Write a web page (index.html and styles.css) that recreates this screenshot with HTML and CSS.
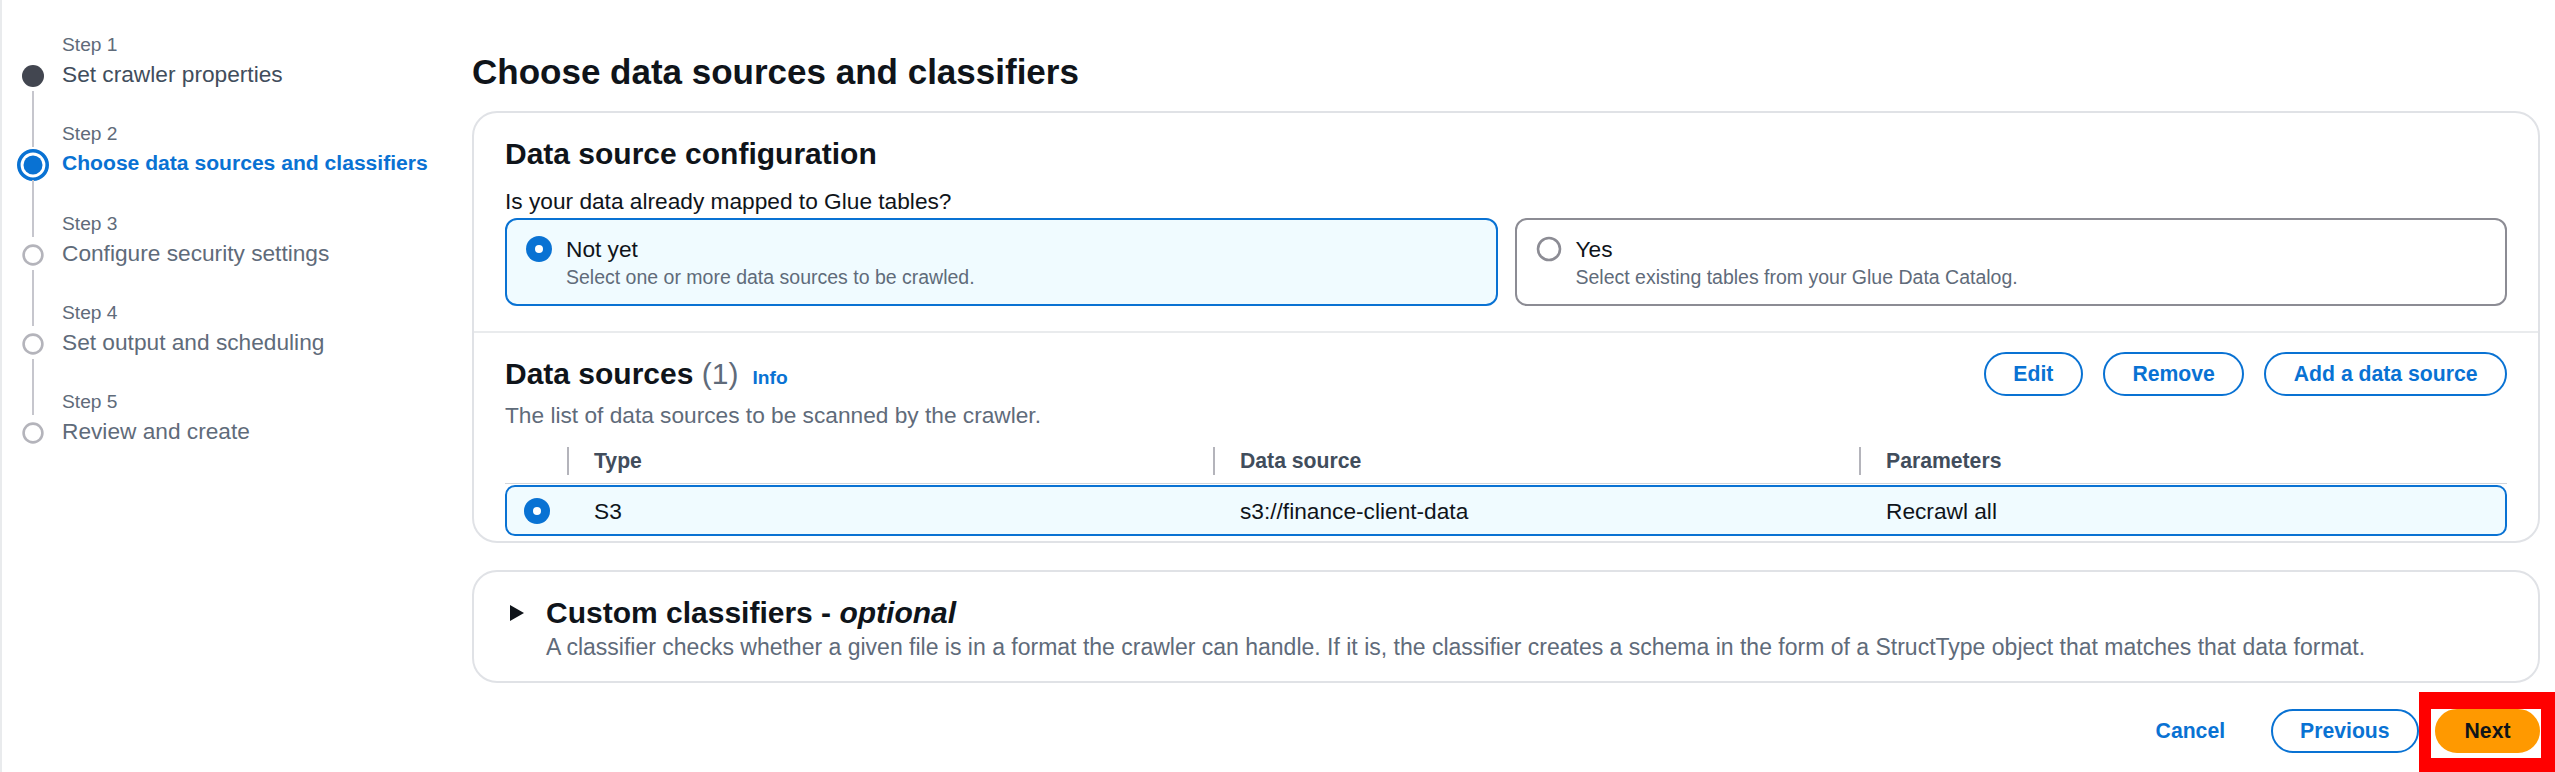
FILE: index.html
```html
<!DOCTYPE html>
<html lang="en">
<head>
<meta charset="utf-8">
<title>Choose data sources and classifiers</title>
<link rel="stylesheet" href="styles.css">
</head>
<body>
<div class="page">
  <nav class="steps">
    <span class="rail"></span><span class="step-label">Step 1</span>
    <span class="icon"><svg class="dot" width="22" height="22" viewBox="0 0 22 22"><circle cx="11" cy="11" r="11" fill="#424650"/></svg></span><span class="step-title visited">Set crawler properties</span>

    <span class="rail line"></span><span class="step-label later">Step 2</span>
    <span class="icon"><svg class="ring" width="32" height="32" viewBox="0 0 32 32"><circle cx="16" cy="16" r="14.2" fill="none" stroke="#0972d3" stroke-width="3.6"/><circle cx="16" cy="16" r="9.5" fill="#0972d3"/></svg></span><span class="step-title current">Choose data sources and classifiers</span>

    <span class="rail line"></span><span class="step-label later">Step 3</span>
    <span class="icon"><svg class="empty" width="22" height="22" viewBox="0 0 22 22"><circle cx="11" cy="11" r="9.4" fill="#fff" stroke="#b4b4bb" stroke-width="2.6"/></svg></span><span class="step-title">Configure security settings</span>

    <span class="rail line"></span><span class="step-label later">Step 4</span>
    <span class="icon"><svg class="empty" width="22" height="22" viewBox="0 0 22 22"><circle cx="11" cy="11" r="9.4" fill="#fff" stroke="#b4b4bb" stroke-width="2.6"/></svg></span><span class="step-title">Set output and scheduling</span>

    <span class="rail line"></span><span class="step-label later">Step 5</span>
    <span class="icon"><svg class="empty" width="22" height="22" viewBox="0 0 22 22"><circle cx="11" cy="11" r="9.4" fill="#fff" stroke="#b4b4bb" stroke-width="2.6"/></svg></span><span class="step-title">Review and create</span>
  </nav>

  <main class="main">
    <h1 class="page-title">Choose data sources and classifiers</h1>

    <section class="card">
      <div class="config">
        <h2 class="h2">Data source configuration</h2>
        <div class="question">Is your data already mapped to Glue tables?</div>
        <div class="tiles">
          <div class="tile selected">
            <svg class="radio" width="26" height="26" viewBox="0 0 26 26"><circle cx="13" cy="13" r="13" fill="#0972d3"/><circle cx="13" cy="13" r="4" fill="#fff"/></svg>
            <div class="tile-title">Not yet</div>
            <div class="tile-desc">Select one or more data sources to be crawled.</div>
          </div>
          <div class="tile">
            <svg class="radio" width="26" height="26" viewBox="0 0 26 26"><circle cx="13" cy="13" r="11" fill="#fff" stroke="#8c8c94" stroke-width="2.6"/></svg>
            <div class="tile-title">Yes</div>
            <div class="tile-desc">Select existing tables from your Glue Data Catalog.</div>
          </div>
        </div>
      </div>

      <div class="sources">
        <div class="sources-head">
          <h2 class="h2 head-title">Data sources <span class="count">(1)</span><a class="info">Info</a></h2>
          <div class="actions">
            <button class="btn">Edit</button>
            <button class="btn">Remove</button>
            <button class="btn">Add a data source</button>
          </div>
        </div>
        <p class="desc">The list of data sources to be scanned by the crawler.</p>
        <div class="table">
          <div class="thead">
            <div class="th-sel"></div>
            <div class="th">Type</div>
            <div class="th">Data source</div>
            <div class="th">Parameters</div>
          </div>
          <div class="trow selected">
            <div class="td-sel"><svg class="radio" width="26" height="26" viewBox="0 0 26 26"><circle cx="13" cy="13" r="13" fill="#0972d3"/><circle cx="13" cy="13" r="4" fill="#fff"/></svg></div>
            <div class="td">S3</div>
            <div class="td">s3://finance-client-data</div>
            <div class="td">Recrawl all</div>
          </div>
        </div>
      </div>
    </section>

    <section class="card expandable">
      <div class="exp-head">
        <span class="caret"><svg width="16" height="18" viewBox="0 0 16 18"><polygon points="1,1 15,9 1,17" fill="#0f141a"/></svg></span>
        <h2 class="h2">Custom classifiers - <i>optional</i></h2>
      </div>
      <p class="exp-desc">A classifier checks whether a given file is in a format the crawler can handle. If it is, the classifier creates a schema in the form of a StructType object that matches that data format.</p>
    </section>

    <div class="footer">
      <button class="btn link">Cancel</button>
      <button class="btn">Previous</button>
      <button class="btn primary">Next</button>
    </div>
  </main>
</div>
<div class="annotation"></div>
</body>
</html>
```

FILE: styles.css
```css
html, body {
  margin: 0;
  padding: 0;
}

body {
  position: relative;
  width: 2555px;
  height: 772px;
  overflow: hidden;
  background: #ffffff;
  color: #0f141a;
  font-family: "Liberation Sans", Arial, sans-serif;
}

.page {
  display: flex;
  align-items: flex-start;
}

/* ---------- Wizard navigation ---------- */
.steps {
  box-sizing: border-box;
  width: 472px;
  height: 772px;
  flex: none;
  display: grid;
  grid-template-columns: 32px 1fr;
  column-gap: 13px;
  align-content: start;
  padding: 31px 0 0 15px;
  border-left: 2px solid #e9ebed;
}

.step-label {
  font-size: 19.2px;
  line-height: 28px;
  color: #5f6b7a;
}

.step-label.later {
  padding-top: 31.3px;
}

.rail.line {
  justify-self: center;
  width: 2px;
  background: #c6c6cd;
  margin: 2px 0 1px;
}

.icon {
  height: 30px;
  display: flex;
  align-items: center;
  justify-content: center;
}

.icon svg {
  display: block;
  flex: none;
  margin-top: 4px;
}

.step-title {
  font-size: 22.7px;
  line-height: 30px;
  color: #5f6b7a;
  white-space: nowrap;
}

.step-title.visited {
  color: #414d5c;
}

.step-title.current {
  color: #0972d3;
  font-weight: 700;
  font-size: 21.1px;
}

/* ---------- Main ---------- */
.main {
  flex: 1;
  min-width: 0;
  padding: 50px 15px 0 0;
}

.page-title {
  margin: 0;
  font-size: 35px;
  line-height: 44px;
  font-weight: 700;
  color: #0f141a;
}

.card {
  margin-top: 17px;
  border: 2px solid #e0e2e6;
  border-radius: 25px;
  background: #ffffff;
}

.h2 {
  margin: 0;
  font-size: 30px;
  line-height: 38px;
  font-weight: 700;
  color: #0f141a;
}

.config {
  padding: 22px 31px 25px;
  border-bottom: 2px solid #e9ebed;
}

.question {
  margin-top: 13px;
  font-size: 22.7px;
  line-height: 30px;
}

.tiles {
  margin-top: 2px;
  display: grid;
  grid-template-columns: 1fr 1fr;
  column-gap: 17px;
}

.tile {
  display: grid;
  grid-template-columns: 26px 1fr;
  column-gap: 14px;
  padding: 14px 19px;
  border: 2px solid #8c8c94;
  border-radius: 12px;
  background: #ffffff;
}

.tile.selected {
  border-color: #0972d3;
  background: #f0fbff;
}

.tile .radio {
  grid-column: 1;
  grid-row: 1;
  align-self: center;
  display: block;
}

.tile-title {
  grid-column: 2;
  grid-row: 1;
  font-size: 22.7px;
  line-height: 30px;
}

.tile-desc {
  grid-column: 2;
  grid-row: 2;
  font-size: 19.5px;
  line-height: 26px;
  color: #5f6b7a;
}

/* ---------- Data sources ---------- */
.sources {
  padding: 19px 31px 5px;
}

.sources-head {
  display: flex;
  align-items: center;
  justify-content: space-between;
  height: 44px;
}

.head-title {
  padding-top: 3px;
  white-space: nowrap;
}

.count {
  font-weight: 400;
  color: #5f6b7a;
}

.info {
  margin-left: 14px;
  font-size: 19.2px;
  font-weight: 700;
  color: #0972d3;
}

.actions {
  display: flex;
  gap: 20px;
}

.btn {
  box-sizing: border-box;
  height: 44px;
  padding: 0 27.5px;
  border: 2px solid #0972d3;
  border-radius: 22px;
  background: #ffffff;
  color: #0972d3;
  font-family: "Liberation Sans", Arial, sans-serif;
  font-size: 21.2px;
  font-weight: 700;
  line-height: 40px;
  white-space: nowrap;
}

.btn.link {
  border-color: transparent;
  background: transparent;
}

.btn.primary {
  border-color: #ff9900;
  background: #ff9900;
  color: #0f141a;
}

.desc {
  margin: 4px 0 0;
  font-size: 22.7px;
  line-height: 30px;
  color: #5f6b7a;
}

.table {
  margin-top: 2px;
}

.thead {
  display: grid;
  grid-template-columns: 60px 1fr 1fr 1fr;
  align-items: end;
  height: 52px;
  padding: 0 2px 8px;
  box-sizing: border-box;
  border-bottom: 1px solid #d1d5db;
}

.th {
  height: 28px;
  border-left: 2px solid #b4b4bb;
  padding-left: 25px;
  font-size: 21.2px;
  line-height: 28px;
  font-weight: 700;
  color: #414d5c;
}

.trow {
  margin-top: 1px;
  display: grid;
  grid-template-columns: 60px 1fr 1fr 1fr;
  align-items: center;
  height: 47px;
  border: 2px solid #0972d3;
  border-radius: 10px;
  background: #f0fbff;
}

.td-sel {
  display: flex;
  justify-content: center;
}

.td-sel .radio {
  display: block;
}

.td {
  padding-left: 27px;
  font-size: 22.7px;
  line-height: 30px;
}

/* ---------- Expandable ---------- */
.card.expandable {
  margin-top: 27px;
  padding: 22px 31px 19px;
}

.exp-head {
  display: flex;
  align-items: center;
}

.caret {
  width: 41px;
  flex: none;
  display: flex;
  padding-left: 4px;
  box-sizing: border-box;
}

.caret svg {
  display: block;
}

.exp-desc {
  margin: 0 0 0 41px;
  font-size: 23px;
  line-height: 30px;
  color: #5f6b7a;
}

/* ---------- Footer ---------- */
.footer {
  margin-top: 26px;
  display: flex;
  justify-content: flex-end;
  gap: 16px;
}

/* ---------- Annotation overlay ---------- */
.annotation {
  position: absolute;
  left: 2419px;
  top: 692px;
  width: 136px;
  height: 80px;
  box-sizing: border-box;
  border-style: solid;
  border-color: #ff0000;
  border-width: 17px 14px 14px 12px;
}
```
